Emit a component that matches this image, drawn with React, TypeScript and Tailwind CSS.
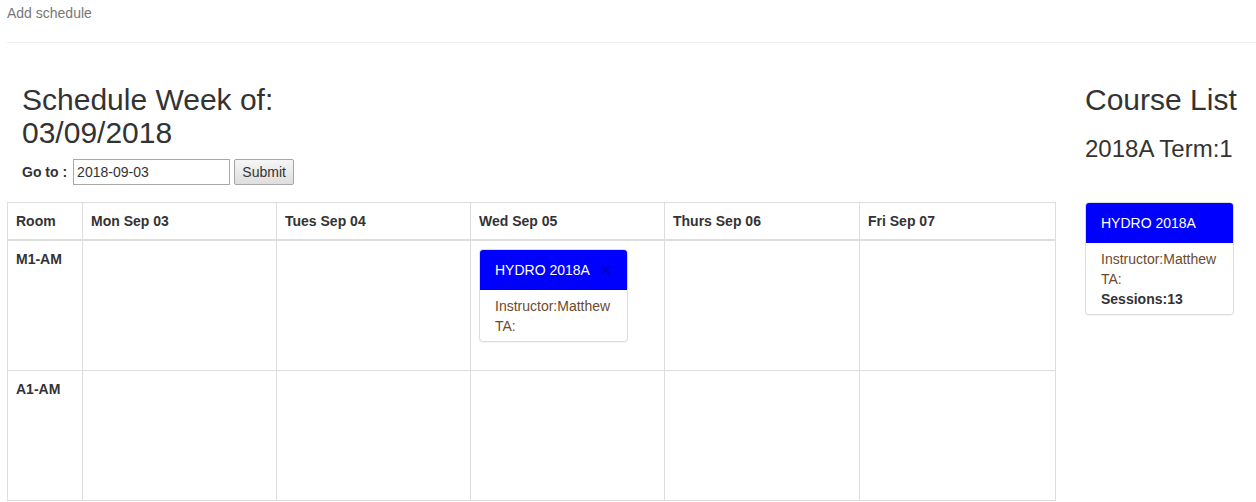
import React from "react";

const DAYS = ["Mon Sep 03", "Tues Sep 04", "Wed Sep 05", "Thurs Sep 06", "Fri Sep 07"];
const ROOMS = ["M1-AM", "A1-AM"];

function CourseCard({ closable, sessions }: { closable?: boolean; sessions?: number }) {
  return (
    <div className="w-[149px] rounded-[4px] border border-[#ddd] bg-white shadow-[0_1px_1px_rgba(0,0,0,0.05)]">
      <div className="flex items-center justify-between rounded-t-[3px] bg-[#0000ff] px-[15px] py-[10px] text-white">
        <span>HYDRO 2018A</span>
        {closable && (
          <span className="text-[21px] font-bold leading-[20px] text-black opacity-20">×</span>
        )}
      </div>
      <div className="px-[15px] pt-[6px] pb-[5px]">
        <div className="text-[#6b4a2e]">Instructor:Matthew</div>
        <div className="text-[#6b4a2e]">TA:</div>
        {sessions !== undefined && <div className="font-bold">Sessions:{sessions}</div>}
      </div>
    </div>
  );
}

export default function App() {
  return (
    <div className="min-h-screen bg-white font-['Liberation_Sans',Arial,sans-serif] text-[14px] leading-[20px] text-[#333]">
      <div className="h-[42px] pl-[7px] pt-[3px]">
        <a href="#" className="text-[#777]">Add schedule</a>
      </div>
      <hr className="ml-[7px] border-0 border-t border-[#eee]" />

      <div className="mt-[20px] flex">
        <div className="ml-[7px] w-[1048px]">
          <div className="pl-[15px]">
            <h2 className="w-[280px] pt-[20px] text-[30px] font-normal leading-[33px]">
              Schedule Week of: 03/09/2018
            </h2>
            <form className="mt-[10px] flex items-center" onSubmit={(e) => e.preventDefault()}>
              <label className="font-bold">Go to :</label>
              <input
                defaultValue="2018-09-03"
                className="ml-[6px] h-[26px] w-[157px] border border-[#a9a9a9] px-[3px] text-[14px] outline-none"
              />
              <button
                type="submit"
                className="ml-[4px] h-[26px] w-[60px] rounded-[2px] border border-[#a6a6a6] bg-gradient-to-b from-[#f6f6f6] to-[#dedede] text-[14px] text-[#333]"
              >
                Submit
              </button>
            </form>
          </div>

          <table className="mt-[17px] w-[1048px] table-fixed border-collapse border border-[#ddd]">
            <colgroup>
              <col className="w-[75px]" />
              <col className="w-[194px]" />
              <col className="w-[194px]" />
              <col className="w-[194px]" />
              <col className="w-[195px]" />
              <col className="w-[196px]" />
            </colgroup>
            <thead>
              <tr>
                <th className="border border-b-2 border-[#ddd] p-[8px] text-left font-bold">Room</th>
                {DAYS.map((d) => (
                  <th key={d} className="border border-b-2 border-[#ddd] p-[8px] text-left font-bold">
                    {d}
                  </th>
                ))}
              </tr>
            </thead>
            <tbody>
              {ROOMS.map((room, ri) => (
                <tr key={room} className="h-[130px]">
                  <td className="border border-[#ddd] p-[8px] align-top font-bold">{room}</td>
                  {DAYS.map((d, di) => (
                    <td key={d} className="border border-[#ddd] p-[8px] align-top">
                      {ri === 0 && di === 2 && <CourseCard closable />}
                    </td>
                  ))}
                </tr>
              ))}
            </tbody>
          </table>
        </div>

        <div className="ml-[30px]">
          <h2 className="pt-[20px] text-[30px] font-normal leading-[33px]">Course List</h2>
          <h3 className="mt-[20px] text-[24px] font-normal leading-[26px]">2018A Term:1</h3>
          <div className="mt-[40px]">
            <CourseCard sessions={13} />
          </div>
        </div>
      </div>
    </div>
  );
}
